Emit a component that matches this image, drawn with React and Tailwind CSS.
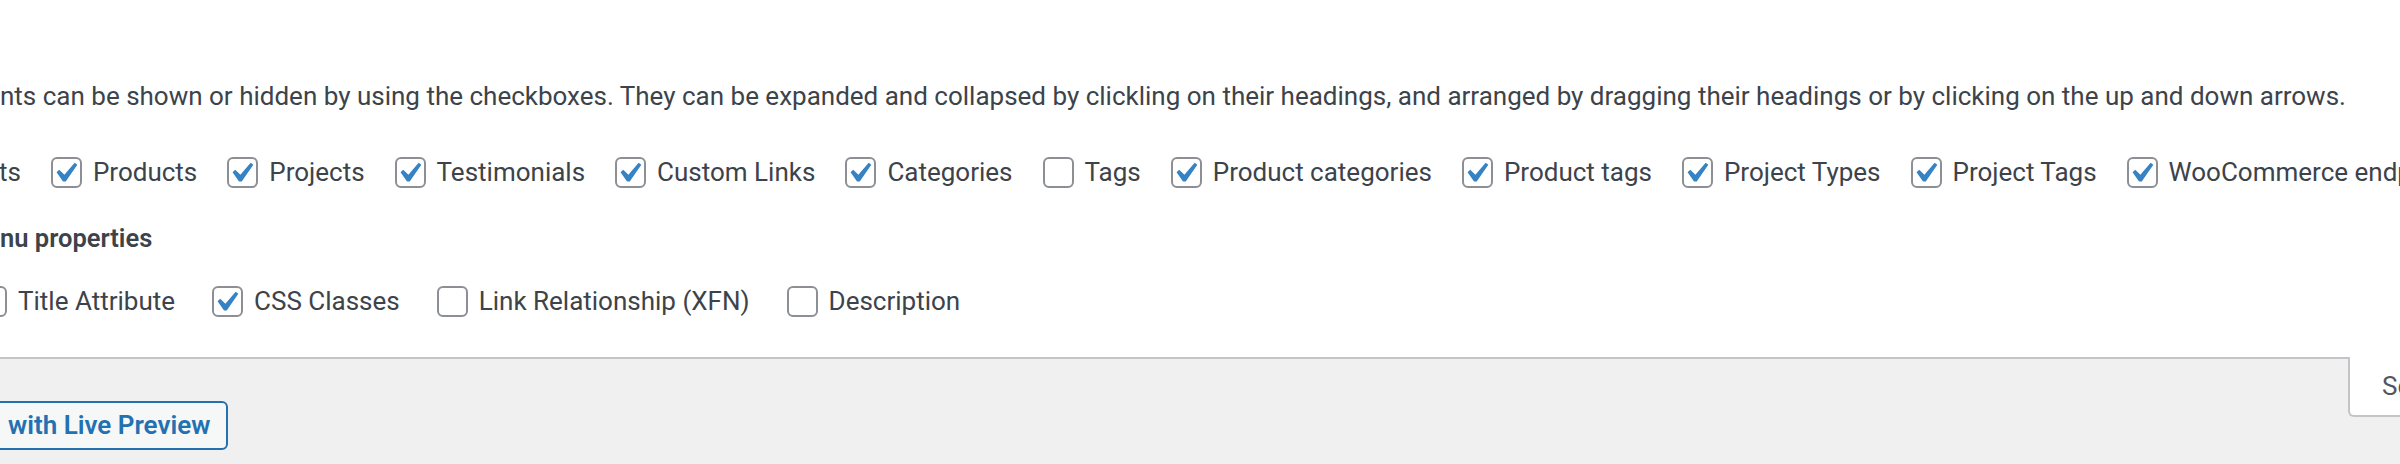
const boxes = [
  ["Products", true],
  ["Projects", true],
  ["Testimonials", true],
  ["Custom Links", true],
  ["Categories", true],
  ["Tags", false],
  ["Product categories", true],
  ["Product tags", true],
  ["Project Types", true],
  ["Project Tags", true],
  ["WooCommerce endpoints", true],
];

const props = [
  ["Title Attribute", false],
  ["CSS Classes", true],
  ["Link Relationship (XFN)", false],
  ["Description", false],
];

function Check({ on }) {
  return (
    <span className="relative w-[31px] h-[31px] shrink-0 rounded-[6px] border-2 border-[#8c8f94] bg-white">
      {on && (
        <svg viewBox="0 0 20 20" className="absolute left-[-8px] top-[-6px] w-[40px] h-[40px]">
          <path d="M14.83 4.89l1.34.94-5.81 8.38H9.02L5.78 9.67l1.34-1.25 2.57 2.4z" fill="#3582c4" />
        </svg>
      )}
    </span>
  );
}

function Opt({ label, on }) {
  return (
    <label className="flex items-center gap-[11px] shrink-0">
      <Check on={on} />
      <span>{label}</span>
    </label>
  );
}

export default function App() {
  return (
    <div className="w-[2400px] h-[464px] overflow-hidden bg-[#f0f0f1] text-[#3c434a] font-['Roboto',sans-serif] text-[26px]">
      <div className="h-[359px] bg-white border-b-2 border-[#c3c4c7] pt-[76px] whitespace-nowrap">
        <p className="h-[40px] flex items-center">
          nts can be shown or hidden by using the checkboxes. They can be expanded and collapsed by clickling on their headings, and arranged by dragging their headings or by clicking on the up and down arrows.
        </p>
        <div className="h-[40px] mt-[36px] flex items-center gap-[30px] -ml-[1px]">
          <span>ts</span>
          {boxes.map(([l, on]) => <Opt key={l} label={l} on={on} />)}
        </div>
        <div className="h-[40px] mt-[26px] flex items-center font-semibold text-[25.5px]">nu properties</div>
        <div className="h-[40px] mt-[23px] flex items-center gap-[37px] -ml-[24px]">
          {props.map(([l, on]) => <Opt key={l} label={l} on={on} />)}
        </div>
      </div>
      <div className="flex items-start">
        <button className="mt-[42px] -ml-[20px] h-[49px] pl-[26px] pr-[16px] rounded-[6px] border-2 border-[#2271b1] bg-[#f6f7f7] text-[#2271b1] font-semibold whitespace-nowrap">
          with Live Preview
        </button>
        <div className="ml-auto -mr-[248px] -mt-[2px] w-[300px] h-[60px] shrink-0 flex items-center pl-[32px] bg-white border-l-2 border-b-2 border-[#c3c4c7] rounded-bl-[6px] text-[#50575e] whitespace-nowrap">
          Screen Options
        </div>
      </div>
    </div>
  );
}
